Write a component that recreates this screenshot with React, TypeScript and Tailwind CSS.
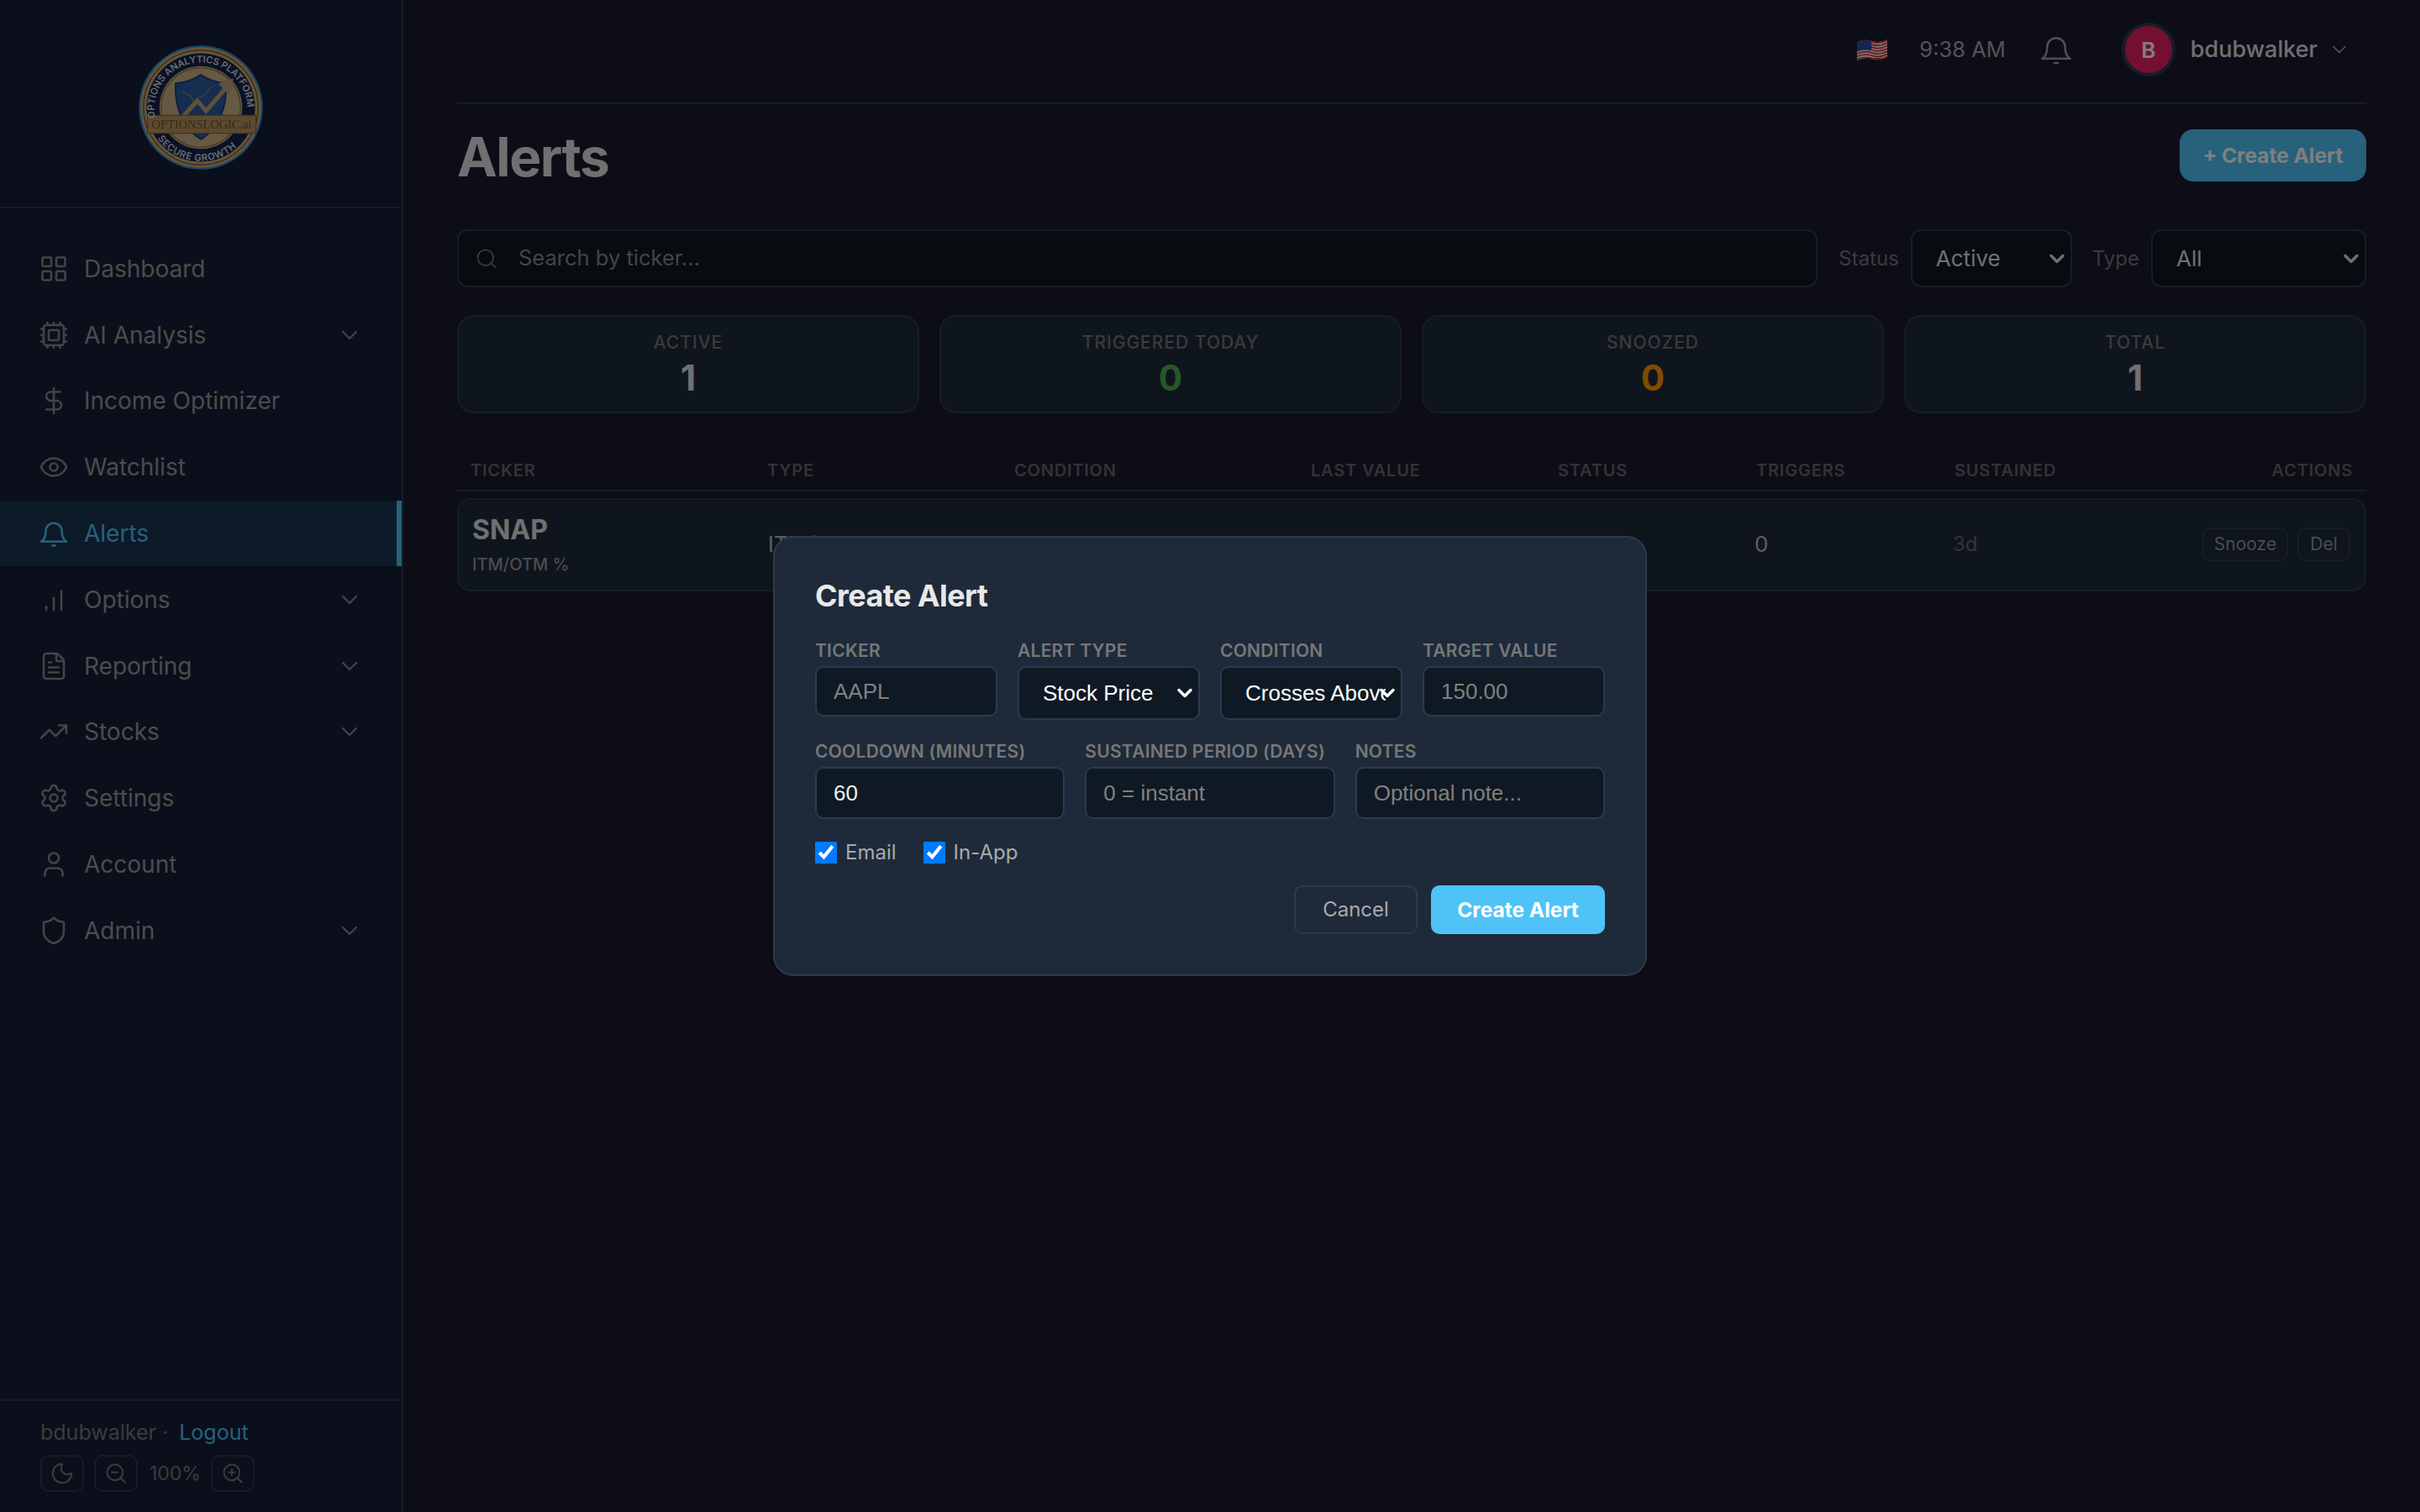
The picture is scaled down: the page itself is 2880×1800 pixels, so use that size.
import {
  ChevronDown,
  Cpu,
  DollarSign,
  Eye,
  FileText,
  LayoutGrid,
  Moon,
  Search,
  Settings,
  Shield,
  TrendingUp,
  User,
  ZoomIn,
  ZoomOut,
} from "lucide-react";

const BellIcon = ({ size, stroke = 1.7 }: { size: number; stroke?: number }) => (
  <svg
    width={size}
    height={size}
    viewBox="0 0 24 24"
    fill="none"
    stroke="currentColor"
    strokeWidth={stroke}
    strokeLinecap="round"
    strokeLinejoin="round"
  >
    <path d="M5.6 10.2a6.4 6.4 0 0 1 12.8 0c0 4 .9 6.6 3.6 8.3H2c2.7-1.7 3.6-4.3 3.6-8.3Z" />
    <path d="M10.8 21.6h2.4" />
  </svg>
);

const BarsIcon = () => (
  <svg
    width={36}
    height={36}
    viewBox="0 0 24 24"
    fill="none"
    stroke="currentColor"
    strokeWidth={1.7}
    strokeLinecap="round"
  >
    <path d="M6 20v-2.5" />
    <path d="M12 20v-9.5" />
    <path d="M18 20V5" />
  </svg>
);

const Logo = () => (
  <svg width={164} height={164} viewBox="0 0 160 160">
    <circle cx="80" cy="80" r="72" fill="#2f8fd6" />
    <circle cx="80" cy="80" r="70" fill="#c9a873" />
    <circle cx="80" cy="80" r="66.5" fill="none" stroke="#7a5f38" strokeWidth="1.5" />
    <circle cx="80" cy="80" r="63" fill="#16234a" />
    <circle cx="80" cy="80" r="48" fill="#cdb284" />
    <circle cx="80" cy="80" r="46" fill="none" stroke="#7a5f38" strokeWidth="1" />
    <path d="M80 42 Q94 51 109 52 C111 78 101 104 80 117 C59 104 49 78 51 52 Q66 51 80 42Z" fill="#2a5c9e" stroke="#1d3f86" strokeWidth="2" />
    <path d="M58 62l10 4 5 10M92 56l-8 10-6 2M64 82l8-4" fill="none" stroke="#a88e5e" strokeWidth="1" />
    <path d="M58 92 L76 72 L86 84 L112 54" fill="none" stroke="#bfa274" strokeWidth="5" />
    <path d="M100 52 L118 46 L113 66Z" fill="#bfa274" />
    <rect x="18" y="89" width="126" height="21" fill="#b8955f" stroke="#7a5f38" strokeWidth="1" />
    <defs>
      <path id="coin-top" d="M27 92 A54 54 0 1 1 133 92" />
      <path id="coin-bottom" d="M30 116 A61 61 0 0 0 130 116" />
    </defs>
    <text fontFamily="Inter, sans-serif" fontSize="11" fontWeight="600" fill="#cfd4de">
      <textPath href="#coin-top" textLength="178" lengthAdjust="spacing">
        OPTIONS ANALYTICS PLATFORM
      </textPath>
    </text>
    <text fontFamily="Inter, sans-serif" fontSize="11" fontWeight="600" fill="#cfd4de">
      <textPath href="#coin-bottom" textLength="104" lengthAdjust="spacing">
        SECURE GROWTH
      </textPath>
    </text>
    <text
      x="81"
      y="104"
      textAnchor="middle"
      fontFamily="'Liberation Serif', serif"
      fontSize="15"
      fill="#6f5330"
      textLength="116"
      lengthAdjust="spacingAndGlyphs"
    >
      OPTIONSLOGIC.ai
    </text>
  </svg>
);

const FlagIcon = () => {
  const stripes = [0, 1, 2, 3, 4, 5, 6];
  return (
    <svg width={36} height={26} viewBox="0 0 36 26">
      <path d="M0 4 Q9 0 18 3 T36 1 V22 Q27 24 18 23 T0 26Z" fill="#f4f4f4" />
      {stripes.map((i) => (
        <path
          key={i}
          d={`M0 ${4.8 + i * 3.3} Q9 ${0.8 + i * 3.3} 18 ${3.8 + i * 3.3} T36 ${1.8 + i * 3.3}`}
          fill="none"
          stroke="#d8323c"
          strokeWidth="1.7"
        />
      ))}
      <path d="M0 4 Q8 0.5 17 2.8 V14 Q8 12 0 15Z" fill="#2f4aa0" />
    </svg>
  );
};

const navItems = [
  { label: "Dashboard", icon: <LayoutGrid size={36} strokeWidth={1.7} /> },
  { label: "AI Analysis", icon: <Cpu size={36} strokeWidth={1.7} />, caret: true },
  { label: "Income Optimizer", icon: <DollarSign size={36} strokeWidth={1.7} /> },
  { label: "Watchlist", icon: <Eye size={36} strokeWidth={1.7} /> },
  { label: "Alerts", icon: <BellIcon size={36} />, active: true },
  { label: "Options", icon: <BarsIcon />, caret: true },
  { label: "Reporting", icon: <FileText size={36} strokeWidth={1.7} />, caret: true },
  { label: "Stocks", icon: <TrendingUp size={36} strokeWidth={1.7} />, caret: true },
  { label: "Settings", icon: <Settings size={36} strokeWidth={1.7} /> },
  { label: "Account", icon: <User size={36} strokeWidth={1.7} /> },
  { label: "Admin", icon: <Shield size={36} strokeWidth={1.7} />, caret: true },
];

const Sidebar = () => (
  <aside className="flex h-full w-[480px] shrink-0 flex-col border-r-2 border-[#2a3a4e] bg-[#141f36]">
    <div className="flex h-[248px] justify-center border-b-2 border-[#2a3a4e] pt-[46px]">
      <Logo />
    </div>
    <nav className="pt-[32.5px]">
      {navItems.map((item) => (
        <div
          key={item.label}
          className={`flex h-[78.8px] items-center gap-[18px] pl-[46px] pr-[46px] text-[28px] ${
            item.active
              ? "border-r-[6px] border-[#4fc3f7] bg-[#1a3550] text-[#4fc3f7]"
              : "text-[#999]"
          }`}
        >
          <span className={item.active ? "" : "text-[#888]"}>{item.icon}</span>
          <span className="flex-1">{item.label}</span>
          {item.caret && <ChevronDown size={32} strokeWidth={1.7} className="text-[#888]" />}
        </div>
      ))}
    </nav>
    <div className="mt-auto border-t-2 border-[#2a3a4e] pb-[24px] pl-[48px] pt-[24px]">
      <div className="mb-[14px] text-[25px] leading-[26px] text-[#777]">
        bdubwalker · <a className="ml-[6px] text-[#4fc3f7]">Logout</a>
      </div>
      <div className="flex items-center gap-[12px] text-[#777]">
        <button className="flex h-[44px] w-[52px] items-center justify-center rounded-[10px] border-2 border-[#2a3a4e]">
          <Moon size={30} strokeWidth={1.7} />
        </button>
        <button className="flex h-[44px] w-[52px] items-center justify-center rounded-[10px] border-2 border-[#2a3a4e]">
          <ZoomOut size={28} strokeWidth={1.7} />
        </button>
        <span className="ml-[2px] text-[23px]">100%</span>
        <button className="flex h-[44px] w-[52px] items-center justify-center rounded-[10px] border-2 border-[#2a3a4e]">
          <ZoomIn size={28} strokeWidth={1.7} />
        </button>
      </div>
    </div>
  </aside>
);

const TopBar = () => (
  <header className="flex h-[124px] items-center justify-end border-b-2 border-[#2a3a4e] pb-[4px] pr-[18px]">
    <FlagIcon />
    <span className="ml-[38px] text-[25.5px] text-[#a8a8a8]">9:38 AM</span>
    <span className="ml-[40px] text-[#a0a0a0]">
      <BellIcon size={40} stroke={1.5} />
    </span>
    <div className="ml-[58px] flex size-[64px] items-center justify-center rounded-full border-4 border-[#2a3a4e] bg-[#e91e63] text-[26px] font-semibold text-white">
      B
    </div>
    <span className="ml-[18px] text-[27px] font-medium text-[#e0e0e0]">bdubwalker</span>
    <span className="ml-[12px] text-[#aaa]">
      <ChevronDown size={28} strokeWidth={1.5} />
    </span>
  </header>
);

const SelectBox = ({
  options,
  className,
}: {
  options: string[];
  className: string;
}) => (
  <div className={`relative ${className}`}>
    <select className="h-full w-full appearance-none pl-[28px] pr-[18px] outline-none">
      {options.map((o) => (
        <option key={o}>{o}</option>
      ))}
    </select>
    <ChevronDown
      size={28}
      strokeWidth={3}
      className="pointer-events-none absolute right-[2px] top-1/2 -translate-y-1/2"
    />
  </div>
);

const stats = [
  { label: "ACTIVE", value: "1", color: "text-[#e0e0e0]" },
  { label: "TRIGGERED TODAY", value: "0", color: "text-[#4caf50]" },
  { label: "SNOOZED", value: "0", color: "text-[#ff9800]" },
  { label: "TOTAL", value: "1", color: "text-[#e0e0e0]" },
];

const headCols = "grid grid-cols-[353px_294px_353px_294px_236px_236px_1fr]";
const rowCols = "grid grid-cols-[354px_294px_352px_292px_236px_236px_1fr]";

const AlertsTable = () => (
  <div className="mt-[54px]">
    <div className={`${headCols} border-b-2 border-[#2a3a4e] pb-[9px] pl-[16px] pr-[16px] text-[20px] font-semibold leading-[28px] tracking-[0.8px] text-[#666]`}>
      <span>TICKER</span>
      <span>TYPE</span>
      <span>CONDITION</span>
      <span>LAST VALUE</span>
      <span>STATUS</span>
      <span>TRIGGERS</span>
      <div className="flex justify-between">
        <span>SUSTAINED</span>
        <span>ACTIONS</span>
      </div>
    </div>
    <div className={`${rowCols} mt-[8px] h-[111px] items-center rounded-[16px] border-2 border-[#2a3a4e] bg-[#1e2a3a] pb-[2px] pl-[14px] pr-[17px]`}>
      <div className="ml-[2px]">
        <div className="text-[32px] font-bold leading-[40px] text-[#e0e0e0]">SNAP</div>
        <div className="mt-[8px] text-[20px] font-medium leading-[26px] text-[#999]">ITM/OTM %</div>
      </div>
      <span className="text-[26px] text-[#bbb]">ITM/OTM %</span>
      <span className="text-[26px] text-[#bbb]">Crosses above 10.00%</span>
      <span className="text-[22px] text-[#bbb]">—</span>
      <span className="text-[20px] text-[#bbb]">Active</span>
      <span className="text-[26px] text-[#bbb]">0</span>
      <div className="flex items-center justify-between">
        <span className="text-[24px] text-[#666]">3d</span>
        <div className="flex gap-[11px] text-[21px] text-[#999]">
          <button className="h-[40px] w-[102px] rounded-[10px] border-2 border-[#2a3a4e]">Snooze</button>
          <button className="h-[40px] w-[63px] rounded-[10px] border-2 border-[#2a3a4e]">Del</button>
        </div>
      </div>
    </div>
  </div>
);

const fieldLabel = "mb-[5px] block whitespace-nowrap text-[21px] font-semibold leading-[26px] tracking-[0.25px] text-[#777]";
const fieldInput =
  "block w-full rounded-[10px] border-2 border-[#2a3a4e] bg-[#0f1923] px-[20px] font-['Liberation_Sans',sans-serif] text-[26px] text-[#eee] outline-none placeholder:text-[#808080]";
const fieldSelect =
  "h-[64px] overflow-hidden rounded-[10px] border-2 border-[#2a3a4e] bg-[#0f1923] font-['Liberation_Sans',sans-serif] text-[26px] text-white";

const CreateAlertModal = () => (
  <div className="fixed inset-0 flex items-center justify-center bg-black/50">
    <div className="h-[524px] w-[1040px] rounded-[24px] border-2 border-[#2a3a4e] bg-[#1e2a3a] px-[48px] pt-[48px]">
      <h2 className="mb-[32px] text-[36px] font-bold leading-[42px] tracking-[-0.6px] text-[#e8e8e8]">Create Alert</h2>
      <div className="grid grid-cols-4 gap-[24px]">
        <div>
          <label className={fieldLabel}>TICKER</label>
          <input className={`${fieldInput} h-[60px]`} placeholder="AAPL" />
        </div>
        <div>
          <label className={fieldLabel}>ALERT TYPE</label>
          <SelectBox className={fieldSelect} options={["Stock Price"]} />
        </div>
        <div>
          <label className={fieldLabel}>CONDITION</label>
          <SelectBox className={fieldSelect} options={["Crosses Above"]} />
        </div>
        <div>
          <label className={fieldLabel}>TARGET VALUE</label>
          <input className={`${fieldInput} h-[60px]`} placeholder="150.00" />
        </div>
      </div>
      <div className="mt-[25px] grid grid-cols-3 gap-[24px]">
        <div>
          <label className={fieldLabel}>COOLDOWN (MINUTES)</label>
          <input className={`${fieldInput} h-[62px]`} defaultValue="60" />
        </div>
        <div>
          <label className={fieldLabel}>SUSTAINED PERIOD (DAYS)</label>
          <input className={`${fieldInput} h-[62px]`} placeholder="0 = instant" />
        </div>
        <div>
          <label className={fieldLabel}>NOTES</label>
          <input className={`${fieldInput} h-[62px]`} placeholder="Optional note..." />
        </div>
      </div>
      <div className="mt-[20px] flex items-center gap-[32px] text-[24px] leading-[39px] text-[#aaa]">
        <label className="flex items-center gap-[10px]">
          <input type="checkbox" defaultChecked className="size-[26px] accent-[#007aff]" />
          Email
        </label>
        <label className="flex items-center gap-[10px]">
          <input type="checkbox" defaultChecked className="size-[26px] accent-[#007aff]" />
          In-App
        </label>
      </div>
      <div className="mt-[20px] flex justify-end gap-[16px]">
        <button className="h-[58px] w-[147px] rounded-[10px] border-2 border-[#2a3a4e] text-[24px] text-[#aaa]">Cancel</button>
        <button className="h-[58px] w-[207px] rounded-[10px] bg-[#4fc3f7] text-[24.5px] font-bold text-white">Create Alert</button>
      </div>
    </div>
  </div>
);

const App = () => {
  return (
    <div className="flex h-screen bg-[#1a1a2e] font-[Inter,sans-serif]">
      <Sidebar />
      <main className="min-w-0 flex-1 px-[64px]">
        <TopBar />
        <div className="mt-[30px] flex h-[62px] items-center justify-between">
          <h1 className="mt-[3px] text-[64px] font-bold tracking-[-1.5px] text-[#e0e0e0]">Alerts</h1>
          <button className="h-[62px] w-[222px] rounded-[16px] bg-[#4fc3f7] text-[24.5px] font-bold text-white">
            + Create Alert
          </button>
        </div>
        <div className="mt-[57px] flex h-[69px] items-center">
          <div className="flex h-full flex-1 items-center gap-[24px] rounded-[12px] border-2 border-[#2a3a4e] bg-[#0f1923] pl-[19px]">
            <Search size={28} strokeWidth={1.5} className="text-[#777]" />
            <input
              className="flex-1 bg-transparent text-[25.5px] outline-none placeholder:text-[#8a8a8a]"
              placeholder="Search by ticker..."
            />
          </div>
          <span className="ml-[25px] text-[24px] text-[#777]">Status</span>
          <SelectBox
            className="ml-[14px] h-full w-[192px] overflow-hidden rounded-[12px] border-2 border-[#2a3a4e] bg-[#0f1923] text-[26px] text-[#e0e0e0]"
            options={["Active"]}
          />
          <span className="ml-[24px] text-[24px] text-[#777]">Type</span>
          <SelectBox
            className="ml-[14px] h-full w-[256px] overflow-hidden rounded-[12px] border-2 border-[#2a3a4e] bg-[#0f1923] text-[26px] text-[#e0e0e0]"
            options={["All"]}
          />
        </div>
        <div className="mt-[33px] grid grid-cols-4 gap-[24px]">
          {stats.map((s) => (
            <div
              key={s.label}
              className="flex h-[117px] flex-col items-center rounded-[20px] border-2 border-[#2a3a4e] bg-[#1e2a3a] pt-[18px]"
            >
              <div className="text-[21px] font-medium leading-[26px] tracking-[1px] text-[#777]">{s.label}</div>
              <div className={`mt-[4px] text-[42px] font-bold leading-[50px] ${s.color}`}>{s.value}</div>
            </div>
          ))}
        </div>
        <AlertsTable />
      </main>
      <CreateAlertModal />
    </div>
  );
};

export default App;
